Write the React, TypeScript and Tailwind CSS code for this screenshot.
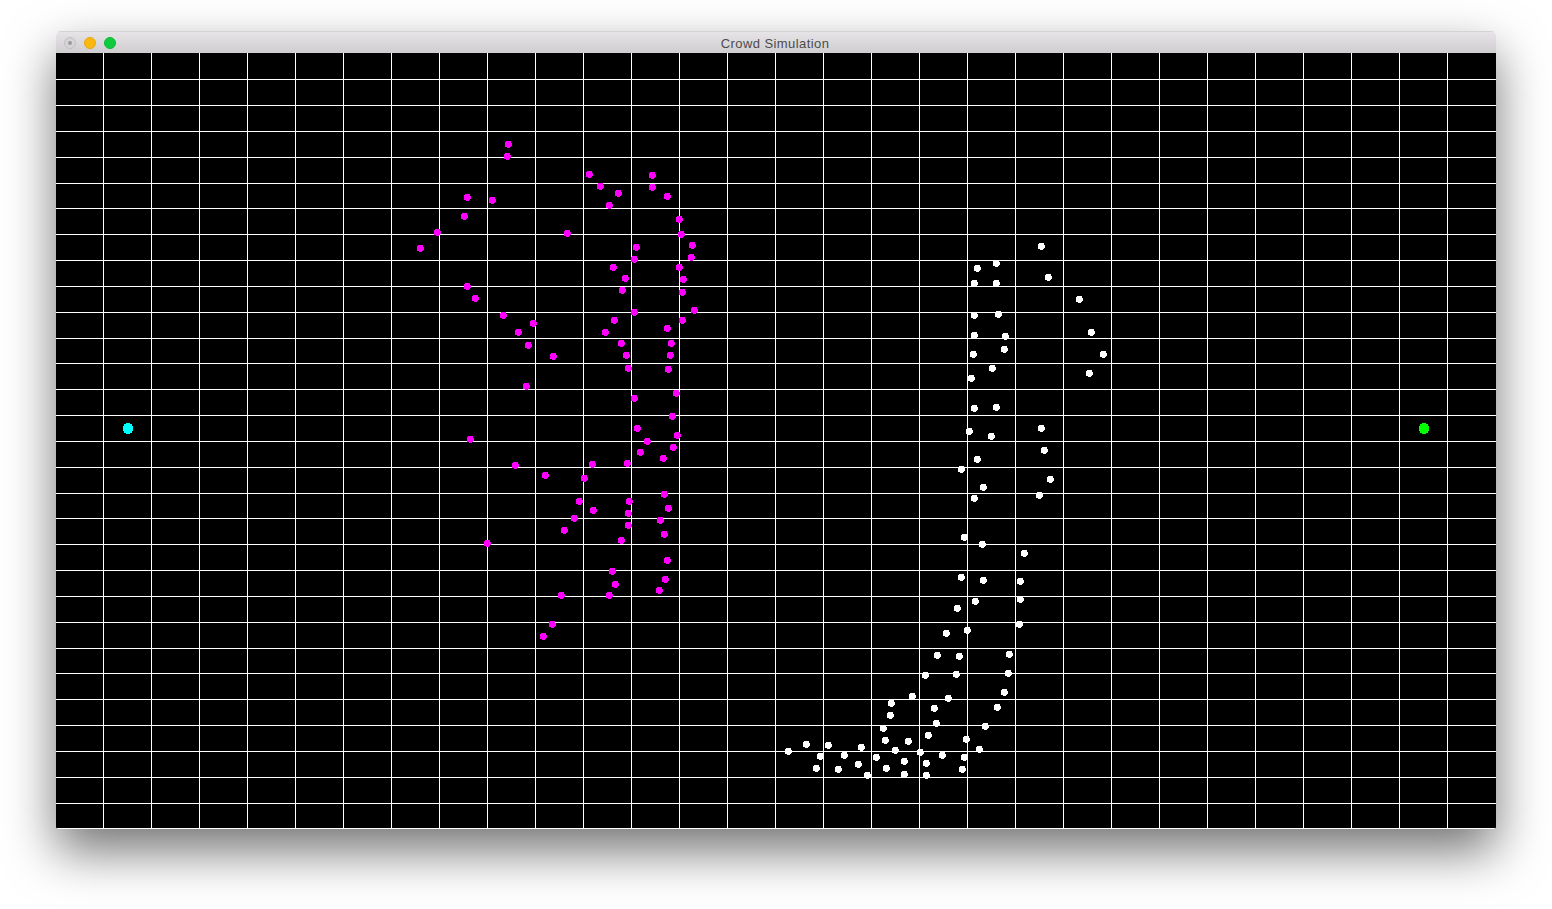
const CELL_W = 48;
const CELL_H = 775 / 30;

// Agent positions, as [x, y] in page pixels
const MAGENTA: [number, number][] = [
  [508, 144], [507, 156], [589, 174], [652, 175], [652, 187], [600, 186], [618, 193], [667, 196],
  [609, 205], [467, 197], [492, 200], [464, 216], [437, 232], [567, 233], [679, 219], [681, 234],
  [692, 245], [691, 257], [636, 247], [634, 259], [420, 248], [613, 267], [679, 267], [683, 279],
  [625, 278], [622, 290], [682, 292], [467, 286], [475, 298], [503, 315], [533, 323], [518, 332],
  [528, 345], [553, 356], [634, 312], [694, 310], [682, 320], [614, 320], [605, 332], [667, 328],
  [671, 343], [621, 343], [626, 355], [670, 355], [628, 368], [668, 369], [526, 386], [676, 393],
  [634, 398], [672, 416], [637, 428], [677, 435], [647, 441], [470, 439], [673, 447], [640, 452],
  [663, 458], [627, 463], [592, 464], [515, 465], [545, 475], [584, 478], [664, 494], [629, 501],
  [579, 501], [668, 508], [593, 510], [628, 513], [574, 518], [660, 520], [628, 525], [564, 530],
  [664, 534], [621, 540], [487, 543], [667, 560], [612, 571], [665, 579], [615, 584], [659, 590],
  [561, 595], [609, 595], [552, 624], [543, 636],
];

const WHITE: [number, number][] = [
  [1041, 246], [996, 263], [977, 268], [1048, 277], [974, 283], [996, 283], [1079, 299], [974, 315],
  [998, 314], [1091, 332], [974, 335], [1005, 336], [1004, 349], [973, 354], [1103, 354], [992, 368],
  [1089, 373], [971, 378], [974, 408], [996, 407], [1041, 428], [969, 431], [991, 436], [1044, 450],
  [977, 459], [961, 469], [1050, 479], [983, 487], [1039, 495], [974, 498], [964, 537], [982, 544],
  [1024, 553], [961, 577], [983, 580], [1020, 581], [1020, 599], [975, 601], [957, 608], [1019, 624],
  [967, 630], [946, 633], [937, 655], [959, 656], [1009, 654], [1008, 673], [956, 674], [925, 675],
  [1004, 692], [912, 696], [948, 698], [891, 703], [997, 707], [934, 708], [890, 715], [936, 723],
  [985, 726], [883, 728], [928, 735], [966, 739], [885, 740], [908, 741], [979, 749], [806, 744],
  [828, 745], [861, 747], [788, 751], [895, 750], [920, 752], [820, 756], [844, 755], [876, 757],
  [942, 755], [964, 757], [904, 761], [926, 763], [858, 764], [816, 768], [838, 769], [886, 768],
  [962, 769], [904, 774], [867, 775], [926, 775],
];

function Simulation() {
  const verticals = Array.from({ length: 29 }, (_, i) => (i + 1) * CELL_W - 1);
  const horizontals = Array.from({ length: 30 }, (_, i) => Math.round(0.4 + (i + 1) * CELL_H));

  return (
    <svg width={1440} height={776} viewBox="0 0 1440 776" shapeRendering="crispEdges" className="block bg-black">
      {verticals.map((x) => (
        <rect key={x} x={x} y={0} width={1} height={776} fill="#ffffff" />
      ))}
      {horizontals.map((y) => (
        <rect key={y} x={0} y={y} width={1440} height={1} fill="#ffffff" />
      ))}
      {MAGENTA.map(([x, y], i) => (
        <circle key={i} cx={x - 55.7} cy={y - 52.7} r={3.5} fill="#ff00ff" />
      ))}
      {WHITE.map(([x, y], i) => (
        <circle key={i} cx={x - 55.7} cy={y - 52.7} r={3.5} fill="#ffffff" />
      ))}
      <circle cx={72} cy={375.5} r={5.4} fill="#00ffff" />
      <circle cx={1368} cy={375.5} r={5.4} fill="#00ff00" />
    </svg>
  );
}

export default function App() {
  return (
    <div className="h-screen overflow-hidden bg-white pt-[31px] pl-[56px]">
      <div className="w-[1440px] rounded-t-[5px] rounded-b-[2px] shadow-[0_22px_50px_0_rgba(0,0,0,0.55)] overflow-hidden">
        <div className="grid grid-cols-[1fr_auto_1fr] items-center h-[22px] bg-gradient-to-b from-[#e6e4e6] to-[#cfcdcf] border-t border-[#d4d2d4]">
          <div className="flex items-center gap-2 pl-2">
            <div className="flex items-center justify-center w-3 h-3 rounded-full bg-[#d6d4d6] border border-[#c2c0c2]">
              <div className="w-1 h-1 rounded-full bg-[#9c9a9c]" />
            </div>
            <div className="w-3 h-3 rounded-full bg-[#fdb80f] border border-[#e9a70c]" />
            <div className="w-3 h-3 rounded-full bg-[#0ecb3e] border border-[#0cb836]" />
          </div>
          <div className="font-['Liberation_Sans',sans-serif] text-[13px] leading-none text-[#4d4a4d] tracking-[0.42px] -translate-x-px translate-y-px">
            Crowd Simulation
          </div>
          <div />
        </div>
        <Simulation />
      </div>
    </div>
  );
}
